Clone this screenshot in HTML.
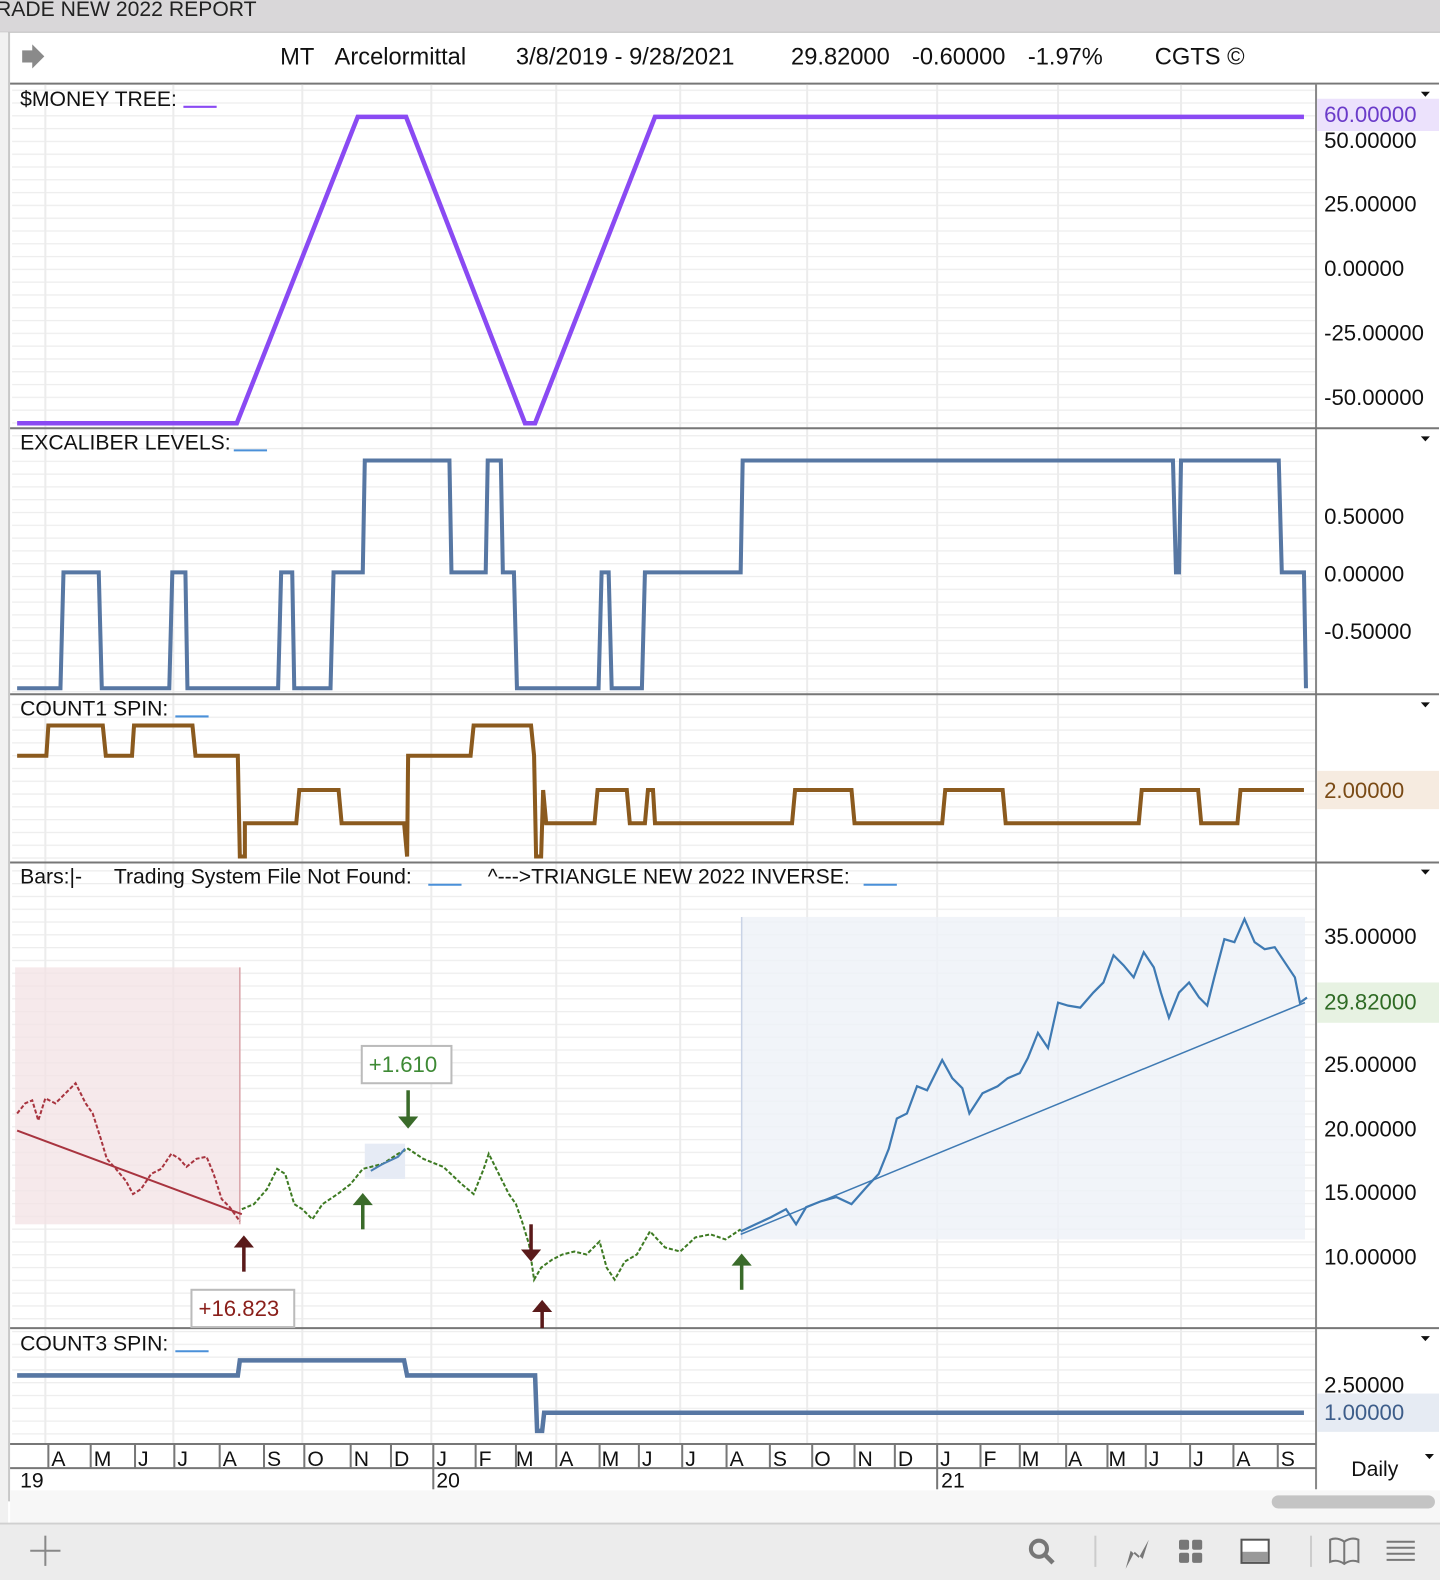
<!DOCTYPE html>
<html><head><meta charset="utf-8"><style>
html,body{margin:0;padding:0;background:#fff;width:1440px;height:1580px;overflow:hidden;}
svg{display:block;position:absolute;left:0;top:0;font-family:"Liberation Sans",Arial,sans-serif;}
</style></head><body>
<svg width="1440" height="1580" viewBox="0 0 1429 1568" preserveAspectRatio="none" xmlns="http://www.w3.org/2000/svg">
<defs>
<pattern id="hg" width="10" height="12.7" patternUnits="userSpaceOnUse"><line x1="0" y1="0.5" x2="10" y2="0.5" stroke="#ededed" stroke-width="1.5"/></pattern>
</defs>
<rect x="0" y="0" width="1440" height="32" fill="#d9d7d9"/>
<text x="-4" y="16" font-size="21" fill="#222">RADE NEW 2022 REPORT</text>
<rect x="0" y="32" width="1440" height="1480" fill="#fff"/>
<line x1="0" y1="32" x2="1440" y2="32" stroke="#bdbdbd"/>
<rect x="0" y="32" width="8" height="1480" fill="#f1f1f1"/>
<line x1="9" y1="32" x2="9" y2="1490" stroke="#c8c8c8" stroke-width="2"/>
<path d="M22 50 h10 v-6 l12 12 l-12 12 v-6 h-10z" fill="#8a8a8a"/>
<g font-size="23.5" fill="#111">
<text x="278" y="64">MT</text><text x="332" y="64">Arcelormittal</text>
<text x="512" y="64">3/8/2019 - 9/28/2021</text>
<text x="785" y="64">29.82000</text><text x="905" y="64">-0.60000</text><text x="1020" y="64">-1.97%</text>
<text x="1146" y="64">CGTS ©</text></g>
<line x1="10" y1="83" x2="1428" y2="83" stroke="#777" stroke-width="2"/>
<rect x="12" y="84" width="1293" height="1348" fill="url(#hg)"/>
<g stroke="#ececec" stroke-width="2">
<line x1="45" y1="84" x2="45" y2="1432"/><line x1="172" y1="84" x2="172" y2="1432"/><line x1="300" y1="84" x2="300" y2="1432"/><line x1="428" y1="84" x2="428" y2="1432"/><line x1="552" y1="84" x2="552" y2="1432"/><line x1="675" y1="84" x2="675" y2="1432"/><line x1="801" y1="84" x2="801" y2="1432"/><line x1="930" y1="84" x2="930" y2="1432"/><line x1="1050" y1="84" x2="1050" y2="1432"/><line x1="1172" y1="84" x2="1172" y2="1432"/>
</g>
<rect x="1306" y="84" width="134" height="1394" fill="#fff"/>
<line x1="1306" y1="83" x2="1306" y2="1478" stroke="#888" stroke-width="2"/>
<g stroke="#777" stroke-width="2">
<line x1="10" y1="425" x2="1428" y2="425"/><line x1="10" y1="689" x2="1428" y2="689"/><line x1="10" y1="856" x2="1428" y2="856"/><line x1="10" y1="1318" x2="1428" y2="1318"/><line x1="10" y1="1433" x2="1306" y2="1433"/><line x1="10" y1="1457" x2="1306" y2="1457"/>
</g>
<g fill="#111"><path d="M1410 91 h9 l-4.5 5z"/><path d="M1410 433 h9 l-4.5 5z"/><path d="M1410 697 h9 l-4.5 5z"/><path d="M1410 863 h9 l-4.5 5z"/><path d="M1410 1326 h9 l-4.5 5z"/><path d="M1414 1443 h9 l-4.5 5z"/></g>
<g font-size="21" fill="#111">
<text x="20" y="105">$MONEY TREE:</text><text x="20" y="446">EXCALIBER LEVELS:</text><text x="20" y="710">COUNT1 SPIN:</text>
<text x="20" y="877">Bars:|-</text><text x="113" y="877">Trading System File Not Found:</text><text x="484" y="877">^---&gt;TRIANGLE NEW 2022 INVERSE:</text>
<text x="20" y="1340">COUNT3 SPIN:</text></g>
<g stroke-width="2"><line x1="182" y1="106" x2="215" y2="106" stroke="#8a4af3"/><line x1="232" y1="447" x2="265" y2="447" stroke="#4a90d9"/><line x1="174" y1="711" x2="207" y2="711" stroke="#4a90d9"/><line x1="425" y1="878" x2="458" y2="878" stroke="#4a90d9"/><line x1="857" y1="878" x2="890" y2="878" stroke="#4a90d9"/><line x1="174" y1="1341" x2="207" y2="1341" stroke="#4a90d9"/></g>
<g font-size="22" fill="#111">
<text x="1314" y="147">50.00000</text><text x="1314" y="210">25.00000</text><text x="1314" y="274">0.00000</text><text x="1314" y="338">-25.00000</text><text x="1314" y="402">-50.00000</text>
<text x="1314" y="520">0.50000</text><text x="1314" y="577">0.00000</text><text x="1314" y="634">-0.50000</text>
<text x="1314" y="937">35.00000</text><text x="1314" y="1064">25.00000</text><text x="1314" y="1128">20.00000</text><text x="1314" y="1191">15.00000</text><text x="1314" y="1255">10.00000</text>
<text x="1314" y="1382">2.50000</text></g>
<rect x="1307" y="98" width="121" height="32" fill="#ece2fc"/><text x="1314" y="121" font-size="22" fill="#6a3bc9">60.00000</text>
<rect x="1307" y="765" width="121" height="38" fill="#f6ebe0"/><text x="1314" y="792" font-size="22" fill="#7a4a15">2.00000</text>
<rect x="1307" y="975" width="121" height="40" fill="#e7f2e2"/><text x="1314" y="1002" font-size="22" fill="#2f6b25">29.82000</text>
<rect x="1307" y="1383" width="121" height="38" fill="#e6ebf3"/><text x="1314" y="1409" font-size="22" fill="#3d5d8a">1.00000</text>
<polyline points="17,420 235,420 355,116 403,116 521,420 531,420 650,116 1294,116" fill="none" stroke="#8a4af3" stroke-width="4.5"/>
<polyline points="17,683 60,683 63,568 98,568 101,683 168,683 171,568 184,568 186,683 276,683 279,568 290,568 292,683 328,683 331,568 360,568 362,457 446,457 448,568 482,568 484,457 497,457 499,568 510,568 513,683 594,683 597,568 604,568 607,683 637,683 640,568 735,568 737,457 1164,457 1167,568 1170,568 1172,457 1269,457 1272,568 1294,568 1296,683" fill="none" stroke="#5777a3" stroke-width="4"/>
<polyline points="17,750 46,750 48,720 102,720 105,750 131,750 133,720 191,720 194,750 236,750 238,850 243,850 243,817 294,817 297,784 336,784 339,817 401,817 404,850 405,750 467,750 470,720 527,720 530,750 532,850 537,850 539,784 542,817 590,817 593,784 622,784 625,817 640,817 643,784 648,784 650,817 786,817 789,784 845,784 848,817 935,817 938,784 995,784 998,817 1130,817 1133,784 1189,784 1192,817 1228,817 1231,784 1294,784" fill="none" stroke="#8b5a1e" stroke-width="4"/>
<rect x="15" y="960" width="223" height="255" fill="#f3e2e4" opacity="0.75"/>
<line x1="238" y1="960" x2="238" y2="1215" stroke="#d9a3a8" stroke-width="1.5"/>
<rect x="736" y="910" width="559" height="320" fill="#eef1f8" opacity="0.8"/>
<line x1="736" y1="910" x2="736" y2="1230" stroke="#c9d3e6" stroke-width="1.5"/>
<rect x="362" y="1135" width="40" height="35" fill="#e6ebf5"/>
<polyline points="17,1105 25,1095 32,1092 38,1112 45,1090 55,1095 65,1085 75,1075 85,1095 92,1105 100,1130 106,1150 115,1160 125,1172 132,1185 140,1180 150,1165 160,1160 170,1145 178,1150 185,1158 195,1150 205,1148 212,1165 220,1190 228,1198 238,1212" fill="none" stroke="#a8343f" stroke-width="2" stroke-dasharray="4 2"/>
<line x1="17" y1="1122" x2="240" y2="1205" stroke="#a8343f" stroke-width="2"/>
<polyline points="240,1200 252,1195 265,1180 275,1160 283,1165 292,1195 300,1200 310,1210 320,1195 335,1185 348,1175 360,1160 380,1155 395,1145 405,1140 420,1150 440,1158 458,1175 470,1185 480,1160 485,1145 495,1165 505,1185 512,1195 518,1212 525,1235 530,1270 537,1258 548,1250 558,1245 570,1242 582,1245 595,1232 602,1258 610,1270 620,1252 632,1245 645,1222 660,1238 675,1242 690,1228 705,1225 720,1230 735,1220" fill="none" stroke="#3d7a22" stroke-width="2" stroke-dasharray="4 2"/>
<polyline points="368,1162 380,1155 395,1148 402,1140" fill="none" stroke="#4a7fb5" stroke-width="2"/>
<polyline points="735,1222 750,1215 765,1208 780,1200 790,1215 800,1198 815,1192 830,1188 845,1195 860,1178 872,1165 882,1140 890,1110 900,1105 910,1078 920,1082 935,1052 945,1070 955,1080 962,1105 975,1085 990,1078 1000,1070 1012,1065 1020,1050 1030,1025 1040,1040 1050,995 1060,998 1072,1000 1085,985 1095,975 1105,948 1115,958 1125,970 1135,945 1145,960 1152,985 1160,1010 1170,985 1180,975 1190,990 1198,998 1205,970 1215,932 1225,935 1235,912 1245,935 1255,942 1265,940 1275,955 1285,970 1290,995 1297,990" fill="none" stroke="#3f7ab3" stroke-width="2.2"/>
<line x1="735" y1="1225" x2="1295" y2="995" stroke="#3f7ab3" stroke-width="1.5"/>
<g stroke-width="3.5"><line x1="242" y1="1262" x2="242" y2="1232" stroke="#5a1a1a"/><line x1="405" y1="1082" x2="405" y2="1112" stroke="#3a6b2a"/><line x1="360" y1="1220" x2="360" y2="1192" stroke="#3a6b2a"/><line x1="527" y1="1215" x2="527" y2="1245" stroke="#5a1a1a"/><line x1="538" y1="1318" x2="538" y2="1298" stroke="#5a1a1a"/><line x1="736" y1="1280" x2="736" y2="1252" stroke="#3a6b2a"/></g>
<path d="M232 1238 l10 -12 l10 12z" fill="#5a1a1a"/><path d="M395 1108 l10 12 l10 -12z" fill="#3a6b2a"/><path d="M350 1196 l10 -12 l10 12z" fill="#3a6b2a"/><path d="M517 1240 l10 12 l10 -12z" fill="#5a1a1a"/><path d="M528 1302 l10 -12 l10 12z" fill="#5a1a1a"/><path d="M726 1256 l10 -12 l10 12z" fill="#3a6b2a"/>
<rect x="359" y="1038" width="89" height="37" fill="#fff" stroke="#bbb" stroke-width="2"/><text x="366" y="1064" font-size="22" fill="#3e8a35">+1.610</text>
<rect x="190" y="1280" width="102" height="37" fill="#fff" stroke="#bbb" stroke-width="2"/><text x="197" y="1306" font-size="22" fill="#8a1f1a">+16.823</text>
<polyline points="17,1365 236,1365 238,1350 401,1350 404,1365 531,1365 533,1420 538,1420 540,1402 1294,1402" fill="none" stroke="#5777a3" stroke-width="4.5"/>
<g stroke="#777" stroke-width="2">
<line x1="48" y1="1433" x2="48" y2="1457"/><line x1="90" y1="1433" x2="90" y2="1457"/><line x1="134" y1="1433" x2="134" y2="1457"/><line x1="173" y1="1433" x2="173" y2="1457"/><line x1="218" y1="1433" x2="218" y2="1457"/><line x1="262" y1="1433" x2="262" y2="1457"/><line x1="302" y1="1433" x2="302" y2="1457"/><line x1="348" y1="1433" x2="348" y2="1457"/><line x1="388" y1="1433" x2="388" y2="1457"/><line x1="430" y1="1433" x2="430" y2="1478"/><line x1="472" y1="1433" x2="472" y2="1457"/><line x1="512" y1="1433" x2="512" y2="1457"/><line x1="552" y1="1433" x2="552" y2="1457"/><line x1="595" y1="1433" x2="595" y2="1457"/><line x1="634" y1="1433" x2="634" y2="1457"/><line x1="677" y1="1433" x2="677" y2="1457"/><line x1="721" y1="1433" x2="721" y2="1457"/><line x1="764" y1="1433" x2="764" y2="1457"/><line x1="806" y1="1433" x2="806" y2="1457"/><line x1="848" y1="1433" x2="848" y2="1457"/><line x1="888" y1="1433" x2="888" y2="1457"/><line x1="930" y1="1433" x2="930" y2="1478"/><line x1="973" y1="1433" x2="973" y2="1457"/><line x1="1012" y1="1433" x2="1012" y2="1457"/><line x1="1058" y1="1433" x2="1058" y2="1457"/><line x1="1099" y1="1433" x2="1099" y2="1457"/><line x1="1137" y1="1433" x2="1137" y2="1457"/><line x1="1181" y1="1433" x2="1181" y2="1457"/><line x1="1224" y1="1433" x2="1224" y2="1457"/><line x1="1268" y1="1433" x2="1268" y2="1457"/>
</g>
<g font-size="21" fill="#111">
<text x="51" y="1455">A</text><text x="93" y="1455">M</text><text x="137" y="1455">J</text><text x="176" y="1455">J</text><text x="221" y="1455">A</text><text x="265" y="1455">S</text><text x="305" y="1455">O</text><text x="351" y="1455">N</text><text x="391" y="1455">D</text><text x="433" y="1455">J</text><text x="475" y="1455">F</text><text x="512" y="1455">M</text><text x="555" y="1455">A</text><text x="597" y="1455">M</text><text x="637" y="1455">J</text><text x="680" y="1455">J</text><text x="724" y="1455">A</text><text x="767" y="1455">S</text><text x="808" y="1455">O</text><text x="851" y="1455">N</text><text x="891" y="1455">D</text><text x="933" y="1455">J</text><text x="976" y="1455">F</text><text x="1014" y="1455">M</text><text x="1060" y="1455">A</text><text x="1100" y="1455">M</text><text x="1140" y="1455">J</text><text x="1184" y="1455">J</text><text x="1227" y="1455">A</text><text x="1271" y="1455">S</text>
<text x="20" y="1476">19</text><text x="433" y="1476">20</text><text x="934" y="1476">21</text>
<text x="1341" y="1465">Daily</text></g>
<rect x="10" y="1479" width="1430" height="33" fill="#f7f7f7"/>
<rect x="1262" y="1484" width="162" height="13" rx="6.5" fill="#c4c4c4"/>
<line x1="0" y1="1512" x2="1440" y2="1512" stroke="#d0d0d0" stroke-width="2"/>
<rect x="0" y="1513" width="1440" height="67" fill="#ececec"/>
<g stroke="#888" stroke-width="2"><line x1="45" y1="1524" x2="45" y2="1554"/><line x1="30" y1="1539" x2="60" y2="1539"/></g>
<circle cx="1031" cy="1537" r="8" fill="none" stroke="#777" stroke-width="4"/><line x1="1037" y1="1543" x2="1045" y2="1551" stroke="#777" stroke-width="4.5"/>
<line x1="1087" y1="1524" x2="1087" y2="1555" stroke="#ccc" stroke-width="2"/><line x1="1301" y1="1524" x2="1301" y2="1555" stroke="#ccc" stroke-width="2"/>
<path d="M1117 1557 l5 -18 l8 7 l10 -18 l-6 19 l-8 -7z" fill="#777"/>
<g fill="#777"><rect x="1170" y="1528" width="10" height="10" rx="2"/><rect x="1183" y="1528" width="10" height="10" rx="2"/><rect x="1170" y="1541" width="10" height="10" rx="2"/><rect x="1183" y="1541" width="10" height="10" rx="2"/></g>
<rect x="1232" y="1528" width="27" height="23" fill="#fff" stroke="#555" stroke-width="2"/><rect x="1233" y="1540" width="25" height="10" fill="#999"/>
<path d="M1320 1550 v-22 q7 -3 14 2 q7 -5 14 -2 v22 q-7 -3 -14 2 q-7 -5 -14 -2z M1334 1530 v22" fill="none" stroke="#777" stroke-width="2"/>
<g stroke="#777" stroke-width="2"><line x1="1376" y1="1530" x2="1404" y2="1530"/><line x1="1376" y1="1536" x2="1404" y2="1536"/><line x1="1376" y1="1542" x2="1404" y2="1542"/><line x1="1376" y1="1548" x2="1404" y2="1548"/></g>
</svg>
</body></html>
